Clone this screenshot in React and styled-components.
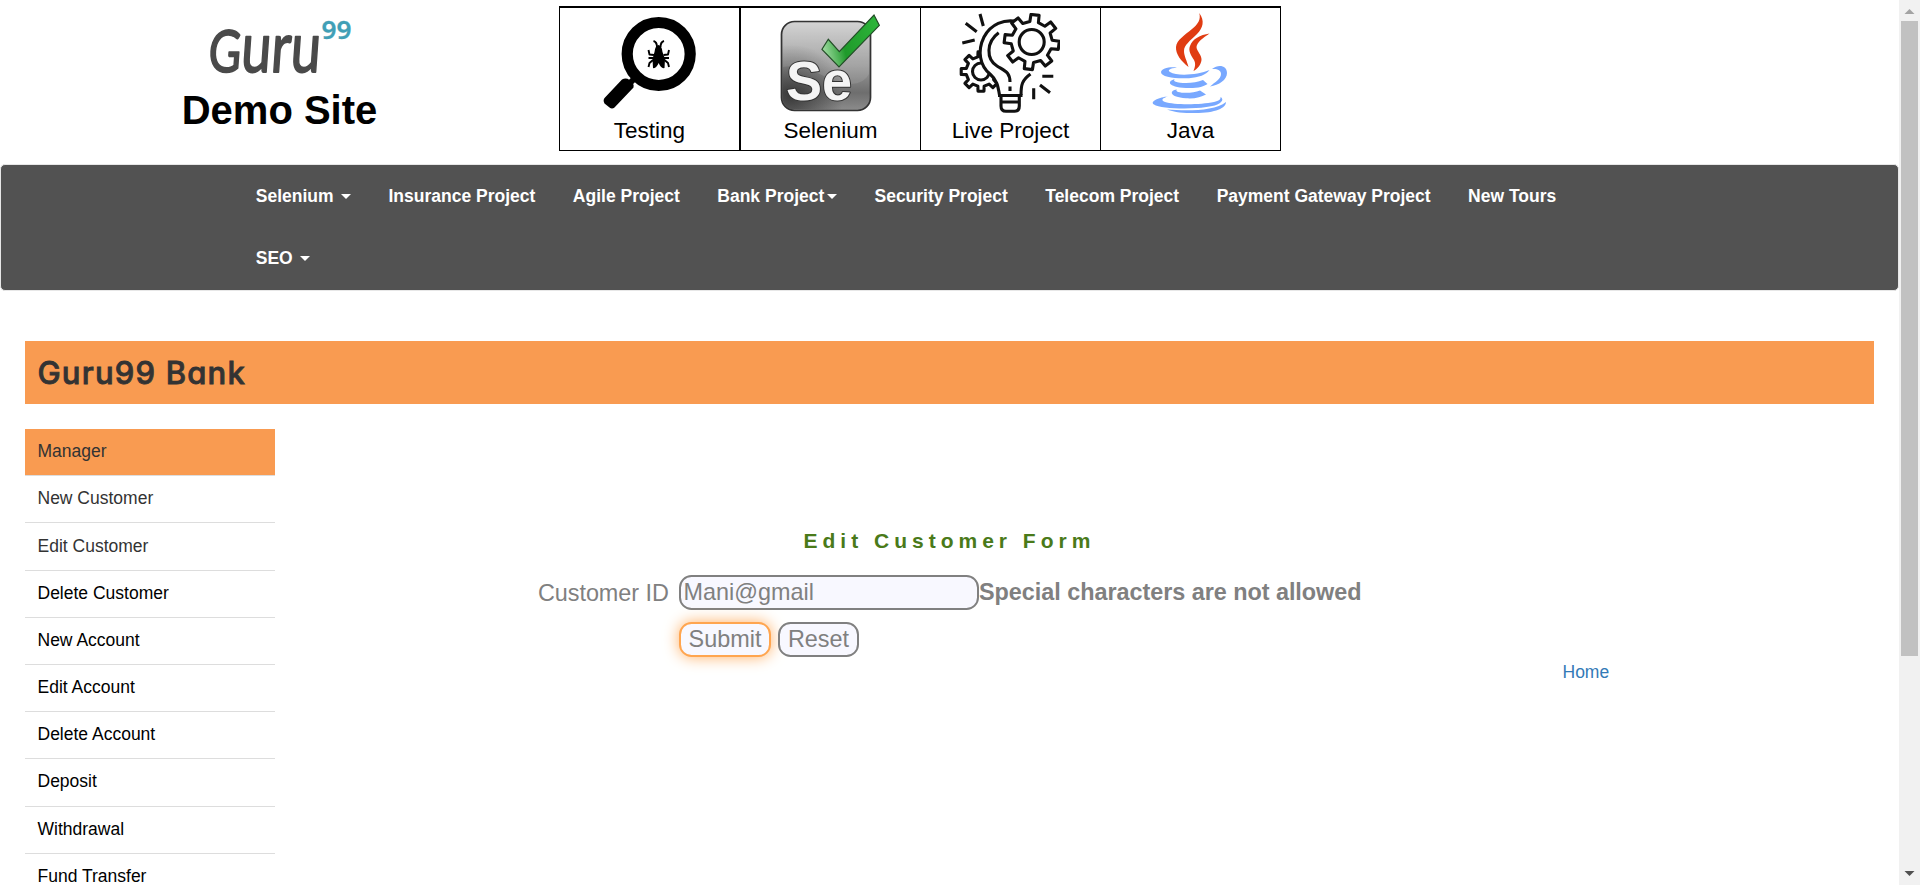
import React from "react";
import styled, { createGlobalStyle, css } from "styled-components";

const GlobalStyle = createGlobalStyle`
  * { box-sizing: border-box; }
  body {
    margin: 0;
    background: #fff;
    color: #333;
    font-family: "Liberation Sans", Arial, sans-serif;
    font-size: 17.5px;
    line-height: 25px;
    overflow: hidden;
  }
`;

const Screen = styled.div`
  display: flex;
  height: 885px;
  overflow: hidden;
`;

const Page = styled.div`
  flex: 1;
  min-width: 0;
  height: 885px;
  overflow: hidden;
`;

/* Header */
const Header = styled.header`
  display: flex;
  height: 164px;
  padding-top: 6px;
`;

const Brand = styled.div`
  width: 559px;
  display: flex;
  flex-direction: column;
  align-items: center;
  color: #000;
`;

const LogoArt = styled.svg`
  display: block;
  overflow: visible;
`;

const SiteName = styled.h1`
  margin: 2px 0 0;
  font-size: 40px;
  line-height: 44px;
  font-weight: 700;
`;

const TileRow = styled.div`
  display: flex;
  width: 722px;
  height: 145px;
  border: 1px solid #000;
  border-top-width: 2px;
`;

const Tile = styled.a`
  width: ${(p) => p.$width}px;
  border-right: ${(p) => p.$divider}px solid #000;
  display: flex;
  flex-direction: column;
  align-items: center;
  padding-top: 5px;
  color: #000;
  font-size: 22.5px;
  line-height: 26px;

  svg {
    display: block;
    margin: 0 ${(p) => p.$nudge}px 5px 0;
  }
`;

/* Navigation */
const Navbar = styled.nav`
  height: 127px;
  border: 1px solid #e7e7e7;
  border-radius: 5px;
  background: #525252;
  padding-left: 236px;
`;

const NavList = styled.ul`
  list-style: none;
  margin: 0;
  padding: 0;
  width: 1426px;
  display: flex;
  flex-wrap: wrap;
`;

const NavItem = styled.li`
  height: 62px;
  padding: 19px 18.75px 18px;
  color: #fff;
  font-weight: 700;
  display: flex;
  line-height: 25px;
  white-space: nowrap;
`;

const Caret = styled.span`
  width: 0;
  height: 0;
  margin: 10px 0 0 ${(p) => p.$gap}px;
  border-top: 5px solid #fff;
  border-left: 5px solid transparent;
  border-right: 5px solid transparent;
`;

/* Bank area */
const TitleBar = styled.h2`
  margin: 50px 25px 25px;
  height: 63px;
  padding: 0 12.5px;
  background: #f99b51;
  color: #333;
  font-family: Inter, "Liberation Sans", sans-serif;
  font-feature-settings: "cv11";
  font-size: 31px;
  line-height: 63px;
  font-weight: 500;
  letter-spacing: 1.2px;
  -webkit-text-stroke: 0.8px #333;
  stroke-linejoin: round;
`;

const Columns = styled.div`
  display: flex;
  padding-left: 25px;
`;

const Menu = styled.ul`
  list-style: none;
  margin: 0;
  padding: 0;
  width: 250px;
  flex: none;
`;

const MenuItem = styled.li`
  height: 47.2px;
  padding: 10.15px 12.5px 0;
  border-bottom: 1px solid #ddd;
  color: ${(p) => (p.$muted ? "#333" : "#000")};
  ${(p) => p.$active && css`background: #f99b51;`}
`;

const Main = styled.main`
  flex: 1;
  display: flex;
  flex-direction: column;
`;

const Form = styled.form`
  width: 900px;
  margin: 97px 0 0 263px;
  color: #808080;
  font-size: 23.4px;
  line-height: 30px;
`;

const FormTitle = styled.h3`
  margin: 0 0 20px;
  padding-left: 265.5px;
  font-size: 21px;
  line-height: 29px;
  letter-spacing: 5px;
  color: #4a7a1a;
`;

const FormRow = styled.div`
  display: grid;
  grid-template-columns: 141px auto;
  height: 34.6px;
  align-items: center;
  margin-bottom: 12.4px;
`;

const FieldLabel = styled.label`
  padding-top: 2px;
  letter-spacing: -0.05px;
`;

const FieldCell = styled.div`
  display: flex;
  align-items: center;
  gap: ${(p) => p.$gap || 0}px;
`;

const control = css`
  appearance: none;
  margin: 0;
  height: 34.6px;
  border: 2px solid #808080;
  border-radius: 12.5px;
  background: #f8f8ff;
  color: #808080;
  font: 23.4px/28px "Liberation Sans", Arial, sans-serif;
  outline: none;
`;

const TextInput = styled.input`
  ${control}
  width: 300px;
  padding: 1px 2px 0 2.5px;
`;

const FormButton = styled.button`
  ${control}
  width: ${(p) => p.$width}px;
  padding: 0;
  ${(p) =>
    p.$focused &&
    css`
      border-color: #ffa54f;
      box-shadow: 0 0 15px #ffb066;
    `}
`;

const ErrorText = styled.label`
  font-weight: 700;
  white-space: nowrap;
  letter-spacing: -0.03px;
`;

const HomeLink = styled.a`
  color: #337ab7;
  margin: -9px 0 0 1287.5px;
`;

/* Scrollbar */
const Scrollbar = styled.aside`
  width: 21px;
  background: #f1f1f1;
  display: flex;
  flex-direction: column;
  align-items: center;
`;

const ScrollThumb = styled.div`
  width: 17px;
  height: 635px;
  background: #c1c1c1;
  margin-bottom: auto;
`;

function Logo() {
  return (
    <LogoArt width="160" height="80" viewBox="200 6 160 80">
      <g transform="translate(207.5 72) skewX(-4) scale(0.7 1)">
        <text
          x="0"
          y="0"
          textLength="160"
          lengthAdjust="spacingAndGlyphs"
          fontFamily="Lato, sans-serif"
          fontWeight="400"
          fill="#4a4a4a"
          stroke="#4a4a4a"
          strokeWidth="1.800"
          strokeLinejoin="round"
        >
          <tspan fontSize="58">G</tspan>
          <tspan fontSize="70">uru</tspan>
        </text>
      </g>
      <text
        x="321.5"
        y="38.500"
        textLength="30"
        lengthAdjust="spacingAndGlyphs"
        fontFamily="Noto Sans, sans-serif"
        fontSize="26"
        fontWeight="600"
        fill="#419fb6"
        stroke="#419fb6"
        strokeWidth="0.300"
      >
        99
      </text>
    </LogoArt>
  );
}

function TestingIcon() {
  return (
    <svg width="100" height="100" viewBox="0 0 100 100">
      <circle cx="58.7" cy="41" r="31.5" fill="none" stroke="#000" strokeWidth="11.2" />
      <path d="M36 64 L30 70" stroke="#000" strokeWidth="6" />
      <path d="M22 66.5 Q26 64.5 29.5 67 Q34.5 70 33.5 74.5 L14.5 94.5 Q12 96.500 9.500 94.5 L4.500 90.500 Q2.500 87 5 84.500 Z" fill="#000" />
      <path d="M58.500 32 Q62 33 62.500 39 L65 46 L64.500 55 Q61 56 58.700 50 Q56 56 53 55 L52.500 46 L54.500 39 Q55 33 58.500 32Z" />
      <g fill="none" stroke="#000" strokeWidth="1.900" strokeLinejoin="round">
        <path d="M57 34 Q57 29 53.500 28 M60.500 34 Q60.500 29 64 28" />
        <path d="M54 42 L49.500 41.500 L48.500 37 M63.500 42 L68 41.500 L69 37" />
        <path d="M53 47 L49.500 50 L48.500 54 M64.500 47 L68 50 L69 54" />
        <path d="M53.500 45 H48.500 M64 45 H69" />
      </g>
    </svg>
  );
}

function SeleniumIcon() {
  return (
    <svg width="100" height="100" viewBox="0 0 100 100">
      <defs>
        <linearGradient id="sePlate" x1="0" y1="0" x2="0" y2="1">
          <stop offset="0" stopColor="#cfcfcf" />
          <stop offset="0.5" stopColor="#999" />
          <stop offset="0.800" stopColor="#6e6e6e" />
          <stop offset="1" stopColor="#8c8c8c" />
        </linearGradient>
        <radialGradient id="seShade" cx="0.1" cy="0.85" r="0.6">
          <stop offset="0" stopColor="#222" stopOpacity="0.700" />
          <stop offset="1" stopColor="#222" stopOpacity="0" />
        </radialGradient>
        <linearGradient id="seCheck" x1="0" y1="0.500" x2="1" y2="0.300">
          <stop offset="0" stopColor="#9ad89c" />
          <stop offset="0.350" stopColor="#1f9a2b" />
          <stop offset="1" stopColor="#2db53a" />
        </linearGradient>
      </defs>
      <rect x="1.500" y="8.500" width="89" height="89" rx="13" fill="url(#sePlate)" stroke="#333" strokeWidth="1.700" />
      <rect x="2.500" y="9.500" width="87" height="87" rx="12" fill="url(#seShade)" />
      <path d="M3 54 Q20 50 50 66 Q80 78 89 61 V21 Q88 10 77 10 H15 Q3 10 3 22Z" fill="#fff" opacity="0.100" />
      <text
        x="6"
        y="86.700"
        textLength="66"
        lengthAdjust="spacingAndGlyphs"
        fontFamily="Liberation Sans, sans-serif"
        fontWeight="700"
        fontSize="56"
        fill="#f4f4f4"
        stroke="#333"
        strokeWidth="2"
        paintOrder="stroke"
        strokeLinejoin="round"
      >
        Se
      </text>
      <path d="M42 36.300 L48.300 26.300 L59.300 38.700 L94 2 L99.300 12.300 L59 54 Z" fill="url(#seCheck)" stroke="#234d27" strokeWidth="1.200" />
    </svg>
  );
}

function gearPath(cx, cy, outer, inner, teeth, turn) {
  const step = 360 / teeth;
  const points = [];
  for (let i = 0; i < teeth; i += 1) {
    const mid = i * step + turn;
    [
      [inner, -step * 0.27],
      [outer, -step * 0.19],
      [outer, step * 0.19],
      [inner, step * 0.27],
    ].forEach(([r, offset]) => {
      const a = ((mid + offset - 90) * Math.PI) / 180;
      points.push(`${(cx + r * Math.cos(a)).toFixed(2)} ${(cy + r * Math.sin(a)).toFixed(2)}`);
    });
  }
  return `M${points.join("L")}Z`;
}

function LiveProjectIcon() {
  return (
    <svg width="101" height="100" viewBox="0 0 101 100">
      <g fill="none" stroke="#111" strokeWidth="3.100" strokeLinejoin="round">
        <path d={gearPath(22, 58.5, 20, 15, 8, 0)} />
        <circle cx="22" cy="58.500" r="8.500" />
        <path
          d="M62 10 C47 4 32 11 25 24 C18 38 21 53 31 61 C38 67 39 73 40 83 H62 C62 73 63 69 71.500 61 L75 52 Z"
          fill="#fff"
          stroke="none"
        />
        <path d="M58 8.500 C45 6 32 11 25 24 C18 38 21 53 31 61 C38 67 39 73 40.500 82" />
        <path d="M71.500 61 C63 67 62 72 62 82" />
        <path d="M39.700 19.700 C27 29 27 46 38 53 C46 58 51 59 51 69 M51 73.500 V78" />
        <path d="M39 82.500 H63.500 M42 82.500 V93 Q42 98.300 47 98.300 H55.500 Q60.300 98.300 60.300 93 V82.500 M42 89 H60" />
        <path d={gearPath(72.7, 29, 27.6, 20.5, 8, 7)} fill="#fff" />
        <circle cx="72.700" cy="29" r="12.500" />
        <path d="M21 1 L24.300 13 M6.700 10.300 L17.700 18.700 M3.300 30 L15.700 27 M83.300 63.300 H94.300 M81 72 L91 79.700 M74.700 75.300 V86.300" />
      </g>
    </svg>
  );
}

function JavaIcon() {
  return (
    <svg width="100" height="100" viewBox="0 0 100 100">
      <g fill="#e03c12">
        <path d="M59.300 0 C65 8 63 15 57 21 C50 28 44 32 44 38 C44 43 47 48 48.500 54 C41 48 35.500 41 36 34 C36.500 27 45 22 52 16 C58 11 61 7 59.300 0Z" />
        <path d="M69.500 20.500 C63 25 57 29 56.500 34 C56.500 38 62 42 61.500 47 C61 52 57 56 53.500 58 C55 54 56 51 54 47 C51 42 48 38 50 33 C52.500 26 60 22 69.500 20.500Z" />
      </g>
      <g fill="#78a8ff">
        <path d="M37 54.500 C30 55.500 27 57 30 59 C37 63.500 58 62 69.500 57 C66 62 59 64.500 49 65.200 C36 66 20.500 64 21 59 C21.500 55.500 29 53.500 37 54.500Z" />
        <path d="M72 56 C79 50.500 87 53 87 60 C87 67 79 72 70 73.500 C75 69 81 66 81 61 C81 57 77 55.500 72 56Z" />
        <path d="M35 66 C27 68 27 74 46 75 C57 75.600 64 73.500 67.500 71 L63 67 C55 70.500 42 71 35 68.500 C33.500 67.500 34 66.500 35 66Z" />
        <path d="M37 76.500 C29 77.500 29 84 46 85.300 C55 86 61 84 66 81.500 L60 77.500 C54 80 44 80.500 38 79 C36 78 36 77 37 76.500Z" />
        <path d="M28 83.500 C20 84 9 88.500 14 91.500 C22 97 72 97 80 90 C83 87.500 83 85.500 80.500 84 C81 86 79 88 74 89 C60 92 34 92 25 89 C20 87 23 85 28 83.500Z" />
        <path d="M86 89 C86 95 76 100 55 100 C43 100 35 99.500 27 96.500 C45 98 75 98.500 86 89Z" />
      </g>
    </svg>
  );
}

const tiles = [
  { label: "Testing", Icon: TestingIcon, width: 181, divider: 2, nudge: 0 },
  { label: "Selenium", Icon: SeleniumIcon, width: 180, divider: 1, nudge: 2 },
  { label: "Live Project", Icon: LiveProjectIcon, width: 180, divider: 1, nudge: 2 },
  { label: "Java", Icon: JavaIcon, width: 179, divider: 0, nudge: 2 },
];

const navItems = [
  { label: "Selenium", caret: 7.4 },
  { label: "Insurance Project" },
  { label: "Agile Project" },
  { label: "Bank Project", caret: 2.7 },
  { label: "Security Project" },
  { label: "Telecom Project" },
  { label: "Payment Gateway Project" },
  { label: "New Tours" },
  { label: "SEO", caret: 7.4 },
];

const menuItems = [
  "Manager",
  "New Customer",
  "Edit Customer",
  "Delete Customer",
  "New Account",
  "Edit Account",
  "Delete Account",
  "Deposit",
  "Withdrawal",
  "Fund Transfer",
];

export default function App() {
  return (
    <Screen>
      <GlobalStyle />
      <Page>
        <Header>
          <Brand>
            <Logo />
            <SiteName>Demo Site</SiteName>
          </Brand>
          <TileRow>
            {tiles.map(({ label, Icon, width, divider, nudge }) => (
              <Tile key={label} $width={width} $divider={divider} $nudge={nudge}>
                <Icon />
                {label}
              </Tile>
            ))}
          </TileRow>
        </Header>
        <Navbar>
          <NavList>
            {navItems.map(({ label, caret }) => (
              <NavItem key={label}>
                {label}
                {caret && <Caret $gap={caret} />}
              </NavItem>
            ))}
          </NavList>
        </Navbar>
        <TitleBar>Guru99 Bank</TitleBar>
        <Columns>
          <Menu>
            {menuItems.map((label, i) => (
              <MenuItem key={label} $active={i === 0} $muted={i < 3}>
                {label}
              </MenuItem>
            ))}
          </Menu>
          <Main>
            <Form>
              <FormTitle>Edit Customer Form</FormTitle>
              <FormRow>
                <FieldLabel>Customer ID</FieldLabel>
                <FieldCell>
                  <TextInput defaultValue="Mani@gmail" />
                  <ErrorText>Special characters are not allowed</ErrorText>
                </FieldCell>
              </FormRow>
              <FormRow>
                <span />
                <FieldCell $gap={7}>
                  <FormButton type="button" $width={92} $focused>
                    Submit
                  </FormButton>
                  <FormButton type="button" $width={81}>
                    Reset
                  </FormButton>
                </FieldCell>
              </FormRow>
            </Form>
            <HomeLink>Home</HomeLink>
          </Main>
        </Columns>
      </Page>
      <Scrollbar>
        <svg width="21" height="21" viewBox="0 0 21 21">
          <path d="M10.500 9 L15.500 14 H5.500Z" fill="#a3a3a3" />
        </svg>
        <ScrollThumb />
        <svg width="21" height="21" viewBox="0 0 21 21">
          <path d="M5.500 7 H15.500 L10.500 12Z" fill="#505050" />
        </svg>
      </Scrollbar>
    </Screen>
  );
}
